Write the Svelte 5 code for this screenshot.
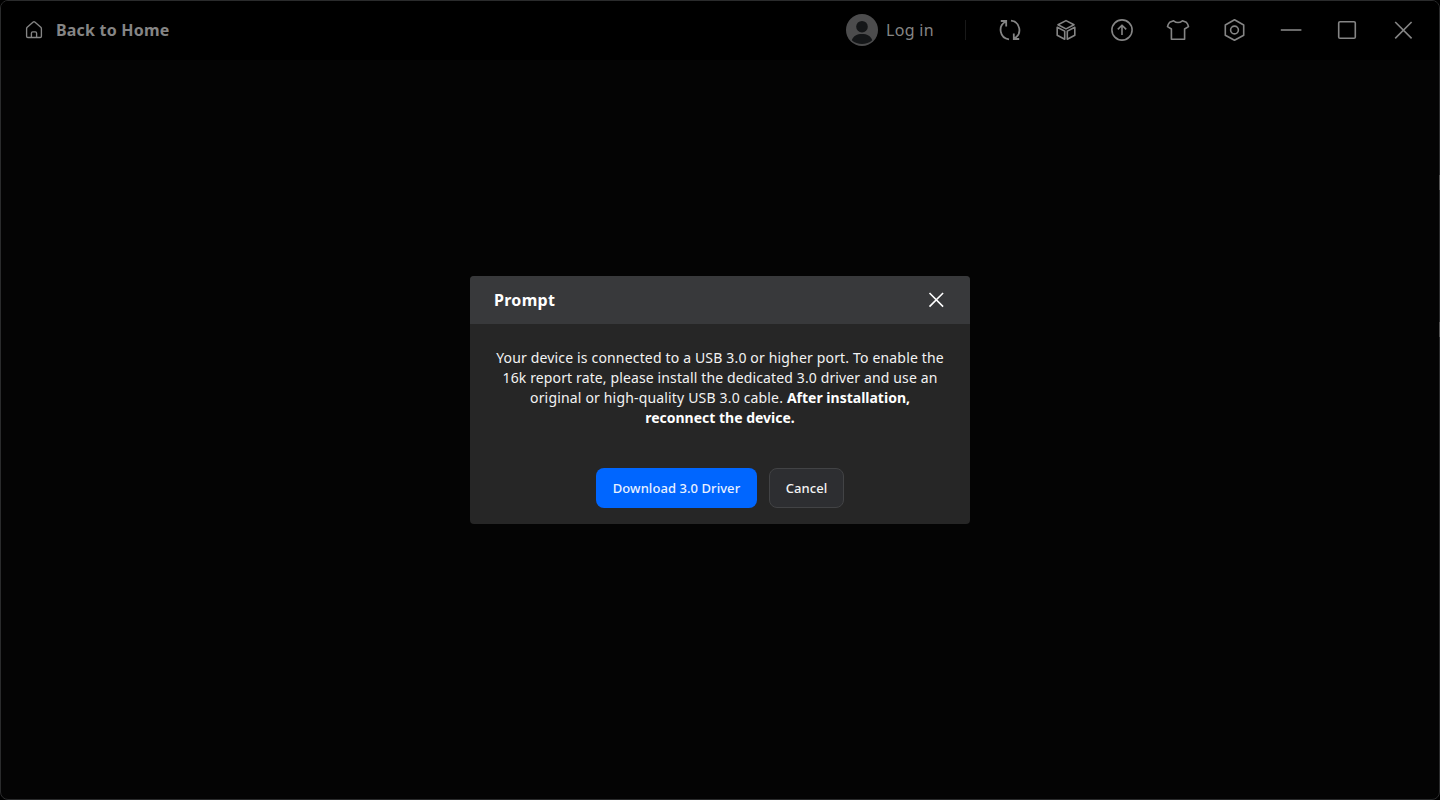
<script>
  const lines = [
    { id: 'l1', text: 'Your device is connected to a USB 3.0 or higher port. To enable the', strong: '' },
    { id: 'l2', text: '16k report rate, please install the dedicated 3.0 driver and use an', strong: '' },
    { id: 'l3', text: 'original or high-quality USB 3.0 cable. ', strong: 'After installation,' },
    { id: 'l4', text: '', strong: 'reconnect the device.' }
  ];
</script>

<div class="window">
  <header>
    <button class="home">
      <svg width="20" height="20" viewBox="0 0 20 20"><path d="M2.600 8.700Q2.600 7.900 3.200 7.300L9.200 2Q10 1.400 10.800 2L16.800 7.300Q17.400 7.900 17.400 8.700V16.200q0 1.300-1.300 1.300H3.900q-1.300 0-1.300-1.300ZM7.400 17.300v-4.100q0-1.300 1.300-1.300h2.600q1.300 0 1.300 1.300v4.100" /></svg>
      <span>Back to Home</span>
    </button>
    <div class="right">
      <button class="login">
        <svg class="avatar" width="32" height="32" viewBox="0 0 32 32"><circle cx="16" cy="16" r="16" fill="#4c4c4d" /><circle cx="16" cy="12.7" r="5.8" fill="#141618" /><path d="M5.8 26.2C7.2 21.8 11.2 19.9 16 19.900s8.800 1.900 10.200 6.300C23.500 28.700 19.800 30 16 30s-7.500-1.300-10.200-3.800Z" fill="#141618" /></svg>
        <span>Log in</span>
      </button>
      <i class="divider"></i>
      <nav>
        <button aria-label="Sync"><svg class="thick" width="24" height="24" viewBox="0 0 24 24"><path d="M11 21.300A9.350 9.350 0 0 1 7.500 3.800M2.800 3H8.200V8.400M13 2.700A9.350 9.350 0 0 1 16.500 20.200M21.200 21H15.800V15.600" /></svg></button>
        <button aria-label="Package"><svg width="24" height="24" viewBox="0 0 24 24"><path d="M12 2.600 20 6.700 12 10.900 4 6.700ZM3.200 9.200 10.700 13.100V21.300L3.200 17.200ZM20.800 9.200 13.300 13.100V21.300L20.800 17.200Z" /></svg></button>
        <button aria-label="Update"><svg width="24" height="24" viewBox="0 0 24 24"><circle cx="12" cy="12" r="10.100" /><path d="M12 17V7.400M7.800 11.400 12 7.200l4.200 4.200" /></svg></button>
        <button aria-label="Theme"><svg width="24" height="24" viewBox="0 0 24 24"><path d="M7.600 2.800Q12 6.200 16.400 2.800L20.300 4.200Q21.900 6 22.500 8.600L18.600 11V21.200H5.400V11L1.500 8.600Q2.100 6 3.700 4.200Z" /></svg></button>
        <button aria-label="Settings"><svg width="24" height="24" viewBox="0 0 24 24"><path d="M12.500 1.800 21.700 7V17.200L12.500 22.300 3.300 17.200V7Z" /><circle cx="12.500" cy="12" r="3.900" /></svg></button>
        <button class="system" aria-label="Minimize"><svg width="24" height="24" viewBox="0 0 24 24"><path d="M1.800 12H22.400" /></svg></button>
        <button aria-label="Maximize"><svg width="24" height="24" viewBox="0 0 24 24"><rect x="3.700" y="3.700" width="16.600" height="16.600" rx="1.300" /></svg></button>
        <button aria-label="Close"><svg width="24" height="24" viewBox="0 0 24 24"><path d="M4.200 4 20.600 20.400M20.600 4 4.200 20.400" /></svg></button>
      </nav>
    </div>
  </header>
  <main>
    <section class="dialog">
      <div class="title">
        <h2>Prompt</h2>
        <button aria-label="Close prompt"><svg width="20" height="20" viewBox="0 0 20 20"><path d="M3.500 3 17.100 16.600M17.100 3 3.500 16.600" /></svg></button>
      </div>
      <p>
        {#each lines as line}
          <span class="line {line.id}"><span>{line.text}</span><b>{line.strong}</b></span>
        {/each}
      </p>
      <div class="actions">
        <button class="primary"><span>Download 3.0 Driver</span></button>
        <button class="cancel"><span>Cancel</span></button>
      </div>
    </section>
  </main>
  <i class="edge first"></i>
  <i class="edge second"></i>
</div>

<style>
  :global(body) { background: #000; overflow: hidden; }
  * { box-sizing: border-box; }
  button { padding: 0; border: 0; background: none; color: inherit; font: inherit; display: flex; align-items: center; justify-content: center; }
  svg { display: block; flex: none; fill: none; stroke: currentColor; stroke-width: 1.6; stroke-linejoin: round; }
  .thick { stroke-width: 1.8; stroke-linejoin: miter; }
  .window { position: relative; width: 1440px; height: 800px; display: flex; flex-direction: column; border: 1px solid #2a2b2c; border-radius: 8px; background: #040404; font-family: "Noto Sans", sans-serif; color: #858585; }
  header { height: 59px; flex: none; display: flex; justify-content: space-between; background: #000; border-radius: 7px 7px 0 0; }
  .home { margin-left: 23px; gap: 12px; height: 58px; font-size: 16px; font-weight: 700; }
  .home svg { stroke-width: 1.35; }
  .home span { letter-spacing: 0.2px; }
  .right { display: flex; align-items: center; height: 58px; }
  .login { gap: 8px; font-size: 16px; letter-spacing: 0.3px; }
  .login span { width: 50px; text-align: left; white-space: nowrap; }
  .avatar { stroke: none; }
  .divider { width: 1px; height: 20px; background: #191919; margin: 0 32px 0 29px; }
  nav { display: flex; gap: 32px; margin-right: 24px; }
  .system { margin-left: 1px; }
  main { flex: 1; display: flex; justify-content: center; align-items: flex-start; padding-top: 216px; }
  .dialog { width: 500px; height: 248px; background: #262626; border-radius: 4px; overflow: hidden; color: #fff; }
  .title { display: flex; justify-content: space-between; align-items: center; height: 48px; padding: 0 24px; background: #38393b; }
  h2 { margin: 0; font-size: 16px; font-weight: 700; letter-spacing: 0.3px; }
  p { margin: 24px 0 0; font-size: 14px; line-height: 20px; color: #f3f3f3; }
  .line { display: flex; justify-content: center; white-space: pre; height: 20px; }
  .l1 { letter-spacing: 0.165px; }
  .l2 { letter-spacing: 0.125px; }
  .l3 span { letter-spacing: 0.17px; }
  b { font-weight: 700; color: #fff; }
  .actions { display: flex; justify-content: center; gap: 12px; margin-top: 40px; font-size: 13px; }
  .actions button { height: 40px; border-radius: 8px; font-weight: 500; letter-spacing: 0.06px; }
  .actions .primary { width: 161px; background: #0066ff; color: #e9f1ff; }
  .actions .cancel { width: 75px; background: #2d2e31; border: 1px solid #424345; color: #f3f3f3; }
  .edge { position: absolute; right: -1px; width: 1px; height: 15px; background: #555; }
  .first { top: 174px; }
  .second { top: 321px; }
</style>
